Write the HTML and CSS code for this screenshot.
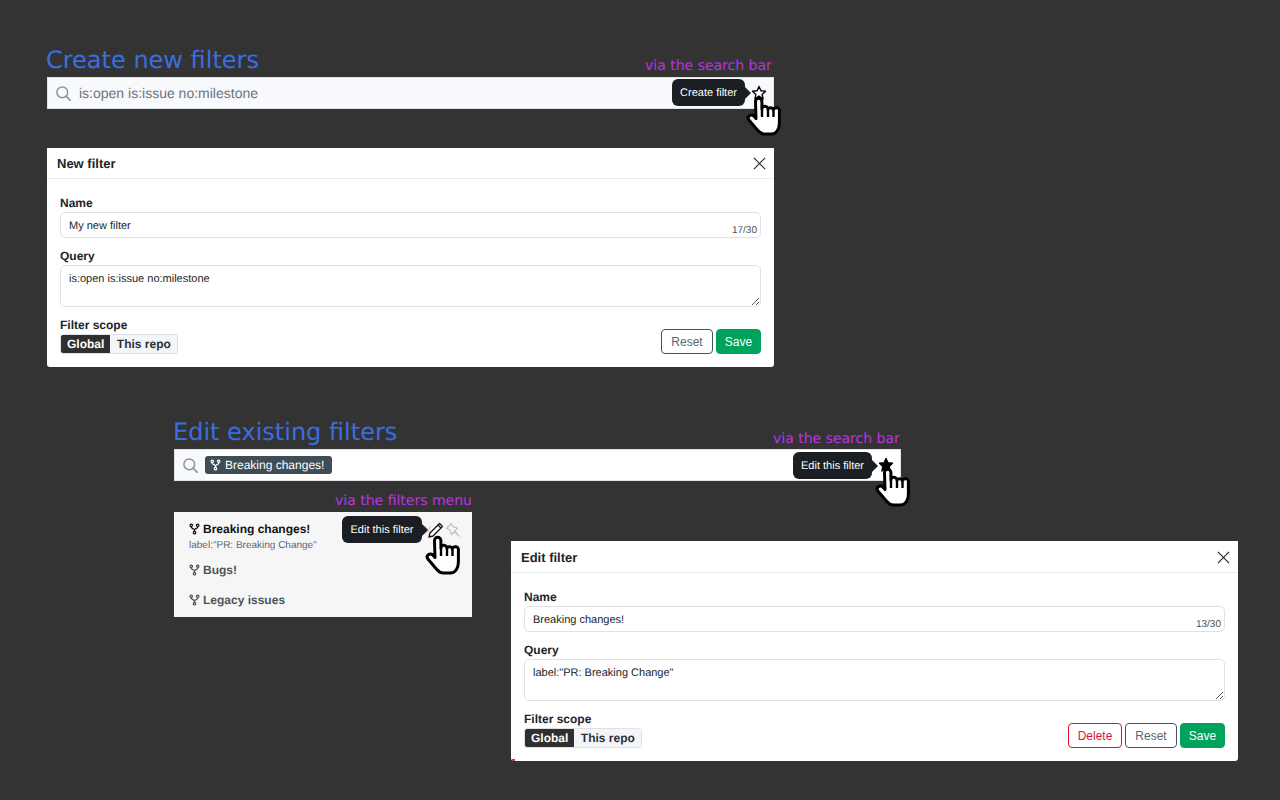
FILE: index.html
```html
<!DOCTYPE html>
<html lang="en">
<head>
<meta charset="utf-8">
<title>Filters</title>
<link rel="stylesheet" href="styles.css">
</head>
<body>
<svg class="defs" width="0" height="0" aria-hidden="true">
  <symbol id="hand" viewBox="0 0 40 44">
    <path d="M10.500 6.500a3.200 3.200 0 0 1 6.400 0V14a3 3 0 0 1 6 .3a3 3 0 0 1 5.500 .7a3 3 0 0 1 6 1.500V28c0 6-3 11-8 11h-7c-3.500 0-5-1.500-7-4l-8.500-10c-2.500-3.500 2-6.500 5-4l2.100 2.500z" fill="#fff" stroke="#000" stroke-width="3" stroke-linejoin="round"/>
    <path d="M17 14v8M23 15v7M28.500 16v6" fill="none" stroke="#000" stroke-width="2.400"/>
  </symbol>
  <symbol id="fork" viewBox="0 0 12 12">
    <g fill="none" stroke="currentColor" stroke-width="1.400">
      <circle cx="2.500" cy="2" r="1.300"/><circle cx="9.500" cy="2" r="1.300"/><circle cx="6" cy="10" r="1.300"/>
      <path d="M2.500 3.300v.7c0 1.500 3.500 1.500 3.500 3v1.700M9.500 3.300v.7c0 1.500-3.500 1.500-3.500 3"/>
    </g>
  </symbol>
  <symbol id="search" viewBox="0 0 15 15">
    <circle cx="6.300" cy="6.300" r="5.400" fill="none" stroke="currentColor" stroke-width="1.500"/>
    <path d="M10.300 10.300l4 4" stroke="currentColor" stroke-width="1.700" stroke-linecap="round"/>
  </symbol>
  <symbol id="star" viewBox="0 0 16 16">
    <path d="M8 1.500l1.900 4.300 4.600.5-3.400 3.100 1 4.600L8 11.200l-4.100 2.800 1-4.600L1.500 6.300l4.600-.5z" stroke="#000" stroke-width="1.400" stroke-linejoin="round"/>
  </symbol>
  <symbol id="close" viewBox="0 0 14 14">
    <path d="M1 1l12 12M13 1L1 13" stroke="#212529" stroke-width="1.200"/>
  </symbol>
</svg>

<h1 class="title title-create">Create new filters</h1>
<p class="note note-create">via the search bar</p>
<div class="search search-create">
  <svg class="search-icon"><use href="#search"/></svg>
  <span class="search-text">is:open is:issue no:milestone</span>
  <div class="tooltip tooltip-create">Create filter</div>
  <svg class="star star-open"><use href="#star"/></svg>
  <svg class="hand hand-create"><use href="#hand"/></svg>
</div>

<section class="modal modal-new">
  <header class="modal-head"><span>New filter</span><svg class="close"><use href="#close"/></svg></header>
  <div class="modal-body">
    <div class="label">Name</div>
    <div class="field">My new filter<span class="count">17/30</span></div>
    <div class="label label-query">Query</div>
    <div class="field field-area">is:open is:issue no:milestone<svg class="grip" viewBox="0 0 8 8"><path d="M1 8l7-7M5 8l3-3" stroke="#555" stroke-width="1"/></svg></div>
    <div class="scope-row">
      <div>
        <div class="label">Filter scope</div>
        <div class="seg"><span class="seg-on">Global</span><span class="seg-off">This repo</span></div>
      </div>
      <div class="actions"><button class="btn btn-reset">Reset</button><button class="btn btn-save">Save</button></div>
    </div>
  </div>
</section>

<h1 class="title title-edit">Edit existing filters</h1>
<p class="note note-edit">via the search bar</p>
<div class="search search-edit">
  <svg class="search-icon"><use href="#search"/></svg>
  <span class="pill"><svg class="fork"><use href="#fork"/></svg>Breaking changes!</span>
  <div class="tooltip tooltip-edit">Edit this filter</div>
  <svg class="star star-filled"><use href="#star"/></svg>
  <svg class="hand hand-edit"><use href="#hand"/></svg>
</div>

<p class="note note-menu">via the filters menu</p>
<div class="menu">
  <div class="menu-item menu-active">
    <div class="menu-name"><svg class="fork"><use href="#fork"/></svg>Breaking changes!</div>
    <div class="menu-query">label:"PR: Breaking Change"</div>
  </div>
  <div class="menu-item menu-second">
    <div class="menu-name"><svg class="fork"><use href="#fork"/></svg>Bugs!</div>
  </div>
  <div class="menu-item menu-third">
    <div class="menu-name"><svg class="fork"><use href="#fork"/></svg>Legacy issues</div>
  </div>
  <svg class="menu-delete" viewBox="0 0 8 12"><path d="M1 2l6 8M7 2l-6 8" stroke="#f6cdd5" stroke-width="1.500"/></svg>
  <div class="tooltip tooltip-menu">Edit this filter</div>
  <svg class="pencil" viewBox="0 0 16 16"><path d="M11.500 1.500l3 3L5 14l-4 1 1-4z" fill="#fff" stroke="#111" stroke-width="1.300" stroke-linejoin="round"/><path d="M10 3l3 3" stroke="#111" stroke-width="1.300"/></svg>
  <svg class="pin" viewBox="0 0 16 16"><g transform="translate(16 0) scale(-1 1)"><path d="M9.500 1.500l5 5-1.500.5-2.500 1.500-.5 3-1 1-2.500-3-3 3 3-3.500-3-2.500 1-1 3-.5L9 3z" fill="none" stroke="#c4c4c4" stroke-width="1.300" stroke-linejoin="round"/><path d="M6 10l-4.500 4.500" stroke="#c4c4c4" stroke-width="1.300"/></g></svg>
  <svg class="hand hand-menu"><use href="#hand"/></svg>
</div>

<section class="modal modal-edit">
  <span class="corner"></span>
  <header class="modal-head"><span>Edit filter</span><svg class="close"><use href="#close"/></svg></header>
  <div class="modal-body">
    <div class="label">Name</div>
    <div class="field">Breaking changes!<span class="count">13/30</span></div>
    <div class="label label-query">Query</div>
    <div class="field field-area">label:"PR: Breaking Change"<svg class="grip" viewBox="0 0 8 8"><path d="M1 8l7-7M5 8l3-3" stroke="#555" stroke-width="1"/></svg></div>
    <div class="scope-row">
      <div>
        <div class="label">Filter scope</div>
        <div class="seg"><span class="seg-on">Global</span><span class="seg-off">This repo</span></div>
      </div>
      <div class="actions"><button class="btn btn-delete">Delete</button><button class="btn btn-reset">Reset</button><button class="btn btn-save">Save</button></div>
    </div>
  </div>
</section>
</body>
</html>
```

FILE: styles.css
```css
* { box-sizing: border-box; }
html, body { margin: 0; height: 800px; overflow: hidden; }
body { position: relative; background: #333333; font-family: "Liberation Sans", Arial, sans-serif; color: #212529; text-rendering: geometricPrecision; }
.defs { position: absolute; }

.title { position: absolute; margin: 0; font: 400 24px/30px "DejaVu Sans", sans-serif; color: #3a6ee0; white-space: nowrap; }
.title-create { left: 46px; top: 45px; }
.title-edit { left: 173px; top: 417px; }

.note { position: absolute; margin: 0; font: 400 14px/18px "DejaVu Sans", sans-serif; color: #b935e0; white-space: nowrap; }
.note-create { left: 645px; top: 57px; }
.note-edit { left: 773px; top: 430px; }
.note-menu { left: 335px; top: 492px; }

.search { position: absolute; width: 727px; height: 32px; display: flex; align-items: center; border: 1px solid #dee2e6; background: #f8f9fc; padding-left: 8px; }
.search-create { left: 47px; top: 77px; }
.search-edit { left: 174px; top: 449px; background: linear-gradient(to right, #f8f9fc 30px, #fff 30px); }
.search-icon { width: 15px; height: 15px; color: #8d969d; flex: none; margin-right: 8px; }
.search-edit .search-icon { margin-right: 7px; }
.search-text { font-size: 14px; color: #6c757d; }

.pill { display: inline-flex; align-items: center; height: 18px; padding: 0 8px 0 5px; border-radius: 3px; background: #3f4d56; color: #fff; font-size: 12px; }
.fork { width: 11px; height: 12px; margin-right: 4px; flex: none; }

.tooltip { position: absolute; display: flex; align-items: center; justify-content: center; height: 27px; padding-top: 1px; border-radius: 6px; background: #1b1f24; color: #fff; font-size: 11px; white-space: nowrap; }
.tooltip::after { content: ""; position: absolute; right: -6px; top: 50%; margin-top: -6px; border-left: 6px solid #1b1f24; border-top: 6px solid transparent; border-bottom: 6px solid transparent; }
.tooltip-create { left: 624px; top: 1px; width: 73px; }
.tooltip-edit { left: 618px; top: 2px; width: 79px; }
.tooltip-menu { left: 168px; top: 4px; width: 80px; }

.star { position: absolute; width: 16px; height: 16px; }
.star-open { left: 703px; top: 7px; fill: #fff; }
.star-filled { left: 703px; top: 7px; fill: #000; }

.hand { position: absolute; width: 40px; height: 44px; }
.hand-create { left: 697px; top: 17px; }
.hand-edit { left: 699px; top: 16px; }
.hand-menu { left: 250px; top: 22px; }

.modal { position: absolute; width: 727px; background: #fff; border-radius: 0 0 3px 3px; }
.modal-new { left: 47px; top: 148px; height: 219px; }
.modal-edit { left: 511px; top: 541px; height: 220px; }
.corner { position: absolute; left: 1px; bottom: 0; width: 3px; height: 2px; background: #e0303c; }
.modal-head { height: 31px; display: flex; align-items: center; justify-content: space-between; padding: 0 8px 0 10px; border-bottom: 1px solid #e9ecef; font-size: 13px; font-weight: 700; }
.modal-edit .modal-head { height: 32px; padding-top: 1px; }
.close { width: 13px; height: 13px; }
.modal-body { padding: 18px 13px 0; }
.label { font-size: 12px; line-height: 13px; font-weight: 700; color: #212529; margin-bottom: 2px; }
.label-query { margin-top: 12px; }
.field { position: relative; height: 26px; padding: 1px 8px 0; border: 1px solid #dee2e6; border-radius: 5px; background: #fff; display: flex; align-items: center; font-size: 11px; color: #212529; margin-top: 2px; }
.field-area { height: 42px; align-items: flex-start; padding-top: 7px; line-height: 13px; }
.count { position: absolute; right: 3px; bottom: 1px; font-size: 10px; line-height: 11px; color: #495057; }
.grip { position: absolute; right: 1px; bottom: 1px; width: 8px; height: 8px; }
.scope-row { display: flex; justify-content: space-between; align-items: flex-end; margin-top: 12px; }
.seg { display: flex; height: 20px; border: 1px solid #dee2e6; border-radius: 3px; overflow: hidden; font-size: 12px; font-weight: 700; line-height: 18px; margin-top: 2px; }
.seg-on { padding: 0 6px; background: #2f2f2f; color: #fff; }
.seg-off { padding: 0 6.500px; background: #f3f5f8; color: #2b3036; }
.actions { display: flex; gap: 3px; }
.btn { height: 25px; padding: 0; border-radius: 4px; font: 400 12px "Liberation Sans", Arial, sans-serif; background: #fff; border: 1px solid #495057; color: #5c656d; }
.btn-reset { width: 52px; }
.btn-save { width: 45px; background: #00a35c; border-color: #00a35c; color: #fff; }
.btn-delete { width: 54px; border-color: #dc143c; color: #dc143c; }

.menu { position: absolute; left: 174px; top: 512px; width: 298px; height: 105px; background: #f6f6f6; }
.menu-item { position: absolute; left: 15px; }
.menu-active { top: 10px; }
.menu-second { top: 51px; }
.menu-third { top: 81px; }
.menu-name { display: flex; align-items: center; height: 13px; font-size: 12px; font-weight: 700; color: #4c545c; }
.menu-name .fork { margin-right: 3px; }
.menu-active .menu-name { color: #111; }
.menu-query { margin-top: 5px; font-size: 10px; line-height: 12px; color: #5f6770; }
.menu-delete { position: absolute; left: 250px; top: 12px; width: 8px; height: 12px; }
.pencil { position: absolute; left: 254px; top: 10px; width: 16px; height: 16px; }
.pin { position: absolute; left: 271px; top: 10px; width: 16px; height: 16px; }
```
